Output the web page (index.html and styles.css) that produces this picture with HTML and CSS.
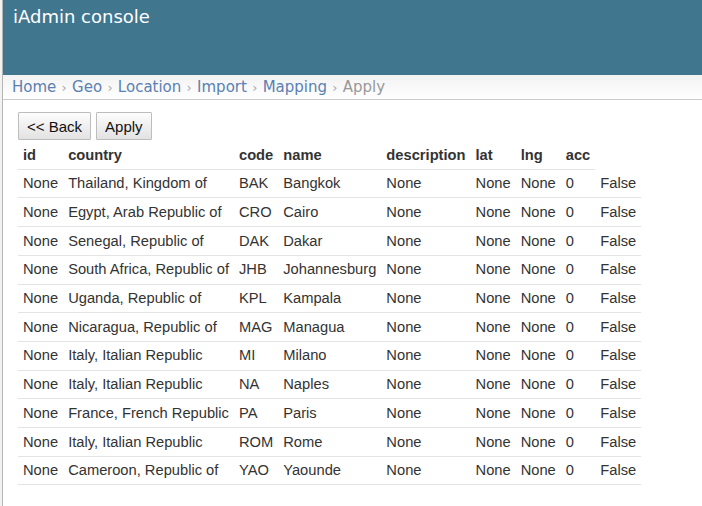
FILE: index.html
```html
<!DOCTYPE html>
<html>
<head>
<meta charset="utf-8">
<title>iAdmin console</title>
<link rel="stylesheet" href="styles.css">
</head>
<body>
<div class="frame">
  <header class="topbar">
    <h1 class="brand">iAdmin console</h1>
  </header>
  <nav class="crumbs">
    <a href="#">Home</a> <span class="sep">›</span> <a href="#">Geo</a> <span class="sep">›</span> <a href="#">Location</a> <span class="sep">›</span> <a href="#">Import</a> <span class="sep">›</span> <a href="#">Mapping</a> <span class="sep">›</span> <span class="current">Apply</span>
  </nav>
  <main class="content">
    <div class="actions">
      <button class="btn">&lt;&lt; Back</button>
      <button class="btn">Apply</button>
    </div>
    <table class="grid">
      <thead>
        <tr><th>id</th><th>country</th><th>code</th><th>name</th><th>description</th><th>lat</th><th>lng</th><th>acc</th></tr>
      </thead>
      <tbody>
        <tr><td>None</td><td>Thailand, Kingdom of</td><td>BAK</td><td>Bangkok</td><td>None</td><td>None</td><td>None</td><td>0</td><td>False</td></tr>
        <tr><td>None</td><td>Egypt, Arab Republic of</td><td>CRO</td><td>Cairo</td><td>None</td><td>None</td><td>None</td><td>0</td><td>False</td></tr>
        <tr><td>None</td><td>Senegal, Republic of</td><td>DAK</td><td>Dakar</td><td>None</td><td>None</td><td>None</td><td>0</td><td>False</td></tr>
        <tr><td>None</td><td>South Africa, Republic of</td><td>JHB</td><td>Johannesburg</td><td>None</td><td>None</td><td>None</td><td>0</td><td>False</td></tr>
        <tr><td>None</td><td>Uganda, Republic of</td><td>KPL</td><td>Kampala</td><td>None</td><td>None</td><td>None</td><td>0</td><td>False</td></tr>
        <tr><td>None</td><td>Nicaragua, Republic of</td><td>MAG</td><td>Managua</td><td>None</td><td>None</td><td>None</td><td>0</td><td>False</td></tr>
        <tr><td>None</td><td>Italy, Italian Republic</td><td>MI</td><td>Milano</td><td>None</td><td>None</td><td>None</td><td>0</td><td>False</td></tr>
        <tr><td>None</td><td>Italy, Italian Republic</td><td>NA</td><td>Naples</td><td>None</td><td>None</td><td>None</td><td>0</td><td>False</td></tr>
        <tr><td>None</td><td>France, French Republic</td><td>PA</td><td>Paris</td><td>None</td><td>None</td><td>None</td><td>0</td><td>False</td></tr>
        <tr><td>None</td><td>Italy, Italian Republic</td><td>ROM</td><td>Rome</td><td>None</td><td>None</td><td>None</td><td>0</td><td>False</td></tr>
        <tr><td>None</td><td>Cameroon, Republic of</td><td>YAO</td><td>Yaounde</td><td>None</td><td>None</td><td>None</td><td>0</td><td>False</td></tr>
      </tbody>
    </table>
  </main>
</div>
</body>
</html>
```
FILE: styles.css
```css
html, body {
  margin: 0;
  padding: 0;
  height: 100%;
}
body {
  background: #f2f2f2;
  font-family: "Liberation Sans", Arial, sans-serif;
  color: #333;
}
.frame {
  margin-left: 2px;
  border-left: 1px solid #b5b5b5;
  background: #fff;
  min-height: 100%;
}
.topbar {
  height: 75px;
  background: #41768f;
}
.brand {
  margin: 0;
  padding: 5px 0 0 10px;
  font-family: "DejaVu Sans", sans-serif;
  font-weight: normal;
  font-size: 18px;
  line-height: 24px;
  color: #fff;
}
.crumbs {
  height: 24px;
  padding-left: 9px;
  border-bottom: 1px solid #cccccc;
  background: linear-gradient(#f3f3f3, #ffffff);
  font-family: "DejaVu Sans", sans-serif;
  font-size: 15px;
  line-height: 24px;
  white-space: nowrap;
}
.crumbs a {
  color: #5b80b2;
  text-decoration: none;
}
.crumbs .sep {
  color: #aaa;
  font-size: 13px;
  margin: 0 0.5px;
}
.crumbs .current {
  color: #999;
}
.content {
  padding: 12px 15px 0 15px;
}
.actions {
  display: flex;
  gap: 5px;
}
.btn {
  font-family: "Liberation Sans", Arial, sans-serif;
  font-size: 15px;
  height: 28px;
  padding: 0 8px;
  color: #111;
  border: 1px solid #bdbdbd;
  border-radius: 1px;
  background: linear-gradient(#fdfdfd, #e2e2e2);
}
.grid {
  margin-top: 1px;
  border-collapse: collapse;
  font-size: 14.7px;
  line-height: 18.7px;
  color: #333;
}
.grid th, .grid td {
  padding: 4.5px 5px 4.5px 5px;
  text-align: left;
  border-bottom: 1px solid #e4e4e4;
  white-space: nowrap;
}
.grid th {
  font-weight: bold;
}
```
